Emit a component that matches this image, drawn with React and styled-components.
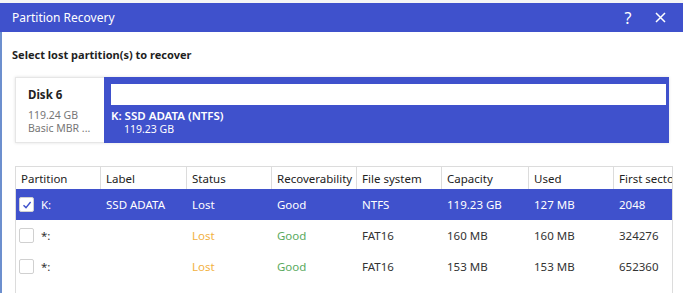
import React from "react"
import styled, { createGlobalStyle } from "styled-components"

const BLUE = "#3f51cc"

const GlobalStyle = createGlobalStyle`
  html, body {
    margin: 0;
    padding: 0;
    background: #f3f3f3;
    font-family: "Noto Sans", "Open Sans", sans-serif;
  }
`

const Screen = styled.div`
  width: 683px;
  height: 293px;
  overflow: hidden;
  display: flex;
  flex-direction: column;
`

const Behind = styled.div`
  height: 3px;
  flex: none;
  background: #f5f5f5;
`

const TitleBar = styled.div`
  height: 29px;
  flex: none;
  background: ${BLUE};
  color: #fff;
  display: flex;
  align-items: center;
  padding: 0 16px 0 12px;
  font-size: 12px;
`

const Title = styled.div`
  flex: 1;
`

const TitleButton = styled.span`
  width: 14px;
  margin-left: 18px;
  display: flex;
  justify-content: center;
  font-size: 16px;
  line-height: 1;
`

const Body = styled.div`
  flex: 1;
  background: #fff;
  border-left: 2px solid #6c8fce;
  padding: 0 10px 0 13px;
`

const Heading = styled.div`
  font-weight: 700;
  font-size: 11px;
  color: #1f1f1f;
  margin: 15px 0 0 -3px;
  height: 16px;
`

const DiskMap = styled.div`
  margin: 14px 4px 0 0;
  height: 66px;
  display: flex;
  box-shadow: 0 0 3px rgba(0, 0, 0, 0.12);
`

const DiskCard = styled.div`
  width: 89px;
  flex: none;
  background: #fff;
  border: 1px solid #e6e6e6;
  border-right: none;
  box-sizing: border-box;
  padding: 10px 0 0 12px;
  font-size: 10.5px;
  color: #777;
  line-height: 13px;
`

const DiskName = styled.div`
  font-weight: 700;
  font-size: 11.5px;
  color: #222;
  margin-bottom: 8px;
`

const PartitionBlock = styled.div`
  flex: 1;
  background: ${BLUE};
  padding: 7px 3px 0 7px;
  color: #fff;
`

const UsageBar = styled.div`
  height: 21px;
  background: #fff;
  margin-bottom: 3px;
`

const PartName = styled.div`
  font-weight: 600;
  font-size: 11.5px;
  line-height: 15px;
`

const PartSize = styled.div`
  padding-left: 13px;
  font-size: 10.5px;
  line-height: 13px;
`

const Table = styled.div`
  margin-top: 23px;
  width: 658px;
  height: 200px;
  border: 1px solid #dcdcdc;
  border-bottom: none;
  box-sizing: border-box;
  font-size: 11.5px;
`

const Row = styled.div`
  display: grid;
  grid-template-columns: 85px 86px 85px 85px 85px 87px 85px 1fr;
  height: ${p => (p.$header ? 22 : 31)}px;
  align-items: center;
  background: ${p => (p.$selected ? BLUE : "#fff")};
  color: ${p => (p.$selected ? "#fff" : "#333")};
`

const HeadCell = styled.div`
  height: 100%;
  display: flex;
  align-items: center;
  padding-left: 5px;
  border-right: 1px solid #dcdcdc;
  white-space: nowrap;
  overflow: hidden;
  color: #222;

  &:last-child {
    border-right: none;
  }
`

const Cell = styled.div`
  display: flex;
  align-items: center;
  padding-left: 5px;
  white-space: nowrap;
  overflow: hidden;
  color: ${p => p.$tone || "inherit"};
`

const Check = styled.span`
  width: 15px;
  height: 15px;
  box-sizing: border-box;
  border: 1px solid #d0d0d0;
  border-radius: 2px;
  background: #fff;
  margin: 0 7px 0 -2px;
  display: flex;
  align-items: center;
  justify-content: center;
`

const columns = ["Partition", "Label", "Status", "Recoverability", "File system", "Capacity", "Used", "First sector"]

const rows = [
  { part: "K:", label: "SSD ADATA", fs: "NTFS", cap: "119.23 GB", used: "127 MB", first: "2048", selected: true },
  { part: "*:", label: "", fs: "FAT16", cap: "160 MB", used: "160 MB", first: "324276" },
  { part: "*:", label: "", fs: "FAT16", cap: "153 MB", used: "153 MB", first: "652360" },
]

export default function App() {
  return (
    <Screen>
      <GlobalStyle />
      <Behind />
      <TitleBar>
        <Title>Partition Recovery</Title>
        <TitleButton>?</TitleButton>
        <TitleButton>
          <svg width="11" height="11" viewBox="0 0 11 11">
            <path d="M1 1L10 10M10 1L1 10" stroke="#fff" strokeWidth="1.5" />
          </svg>
        </TitleButton>
      </TitleBar>
      <Body>
        <Heading>Select lost partition(s) to recover</Heading>
        <DiskMap>
          <DiskCard>
            <DiskName>Disk 6</DiskName>
            <div>119.24 GB</div>
            <div>Basic MBR ...</div>
          </DiskCard>
          <PartitionBlock>
            <UsageBar />
            <PartName>K: SSD ADATA (NTFS)</PartName>
            <PartSize>119.23 GB</PartSize>
          </PartitionBlock>
        </DiskMap>
        <Table>
          <Row $header>
            {columns.map(c => (
              <HeadCell key={c}>{c}</HeadCell>
            ))}
          </Row>
          {rows.map((r, i) => (
            <Row key={i} $selected={r.selected}>
              <Cell>
                <Check>
                  {r.selected && (
                    <svg width="10" height="10" viewBox="0 0 10 10">
                      <path d="M1.5 5.2L4 7.6L8.6 2" fill="none" stroke={BLUE} strokeWidth="1.4" />
                    </svg>
                  )}
                </Check>
                {r.part}
              </Cell>
              <Cell>{r.label}</Cell>
              <Cell $tone={r.selected ? null : "#f2b13f"}>Lost</Cell>
              <Cell $tone={r.selected ? null : "#5aaa5e"}>Good</Cell>
              <Cell>{r.fs}</Cell>
              <Cell>{r.cap}</Cell>
              <Cell>{r.used}</Cell>
              <Cell>{r.first}</Cell>
            </Row>
          ))}
        </Table>
      </Body>
    </Screen>
  )
}
